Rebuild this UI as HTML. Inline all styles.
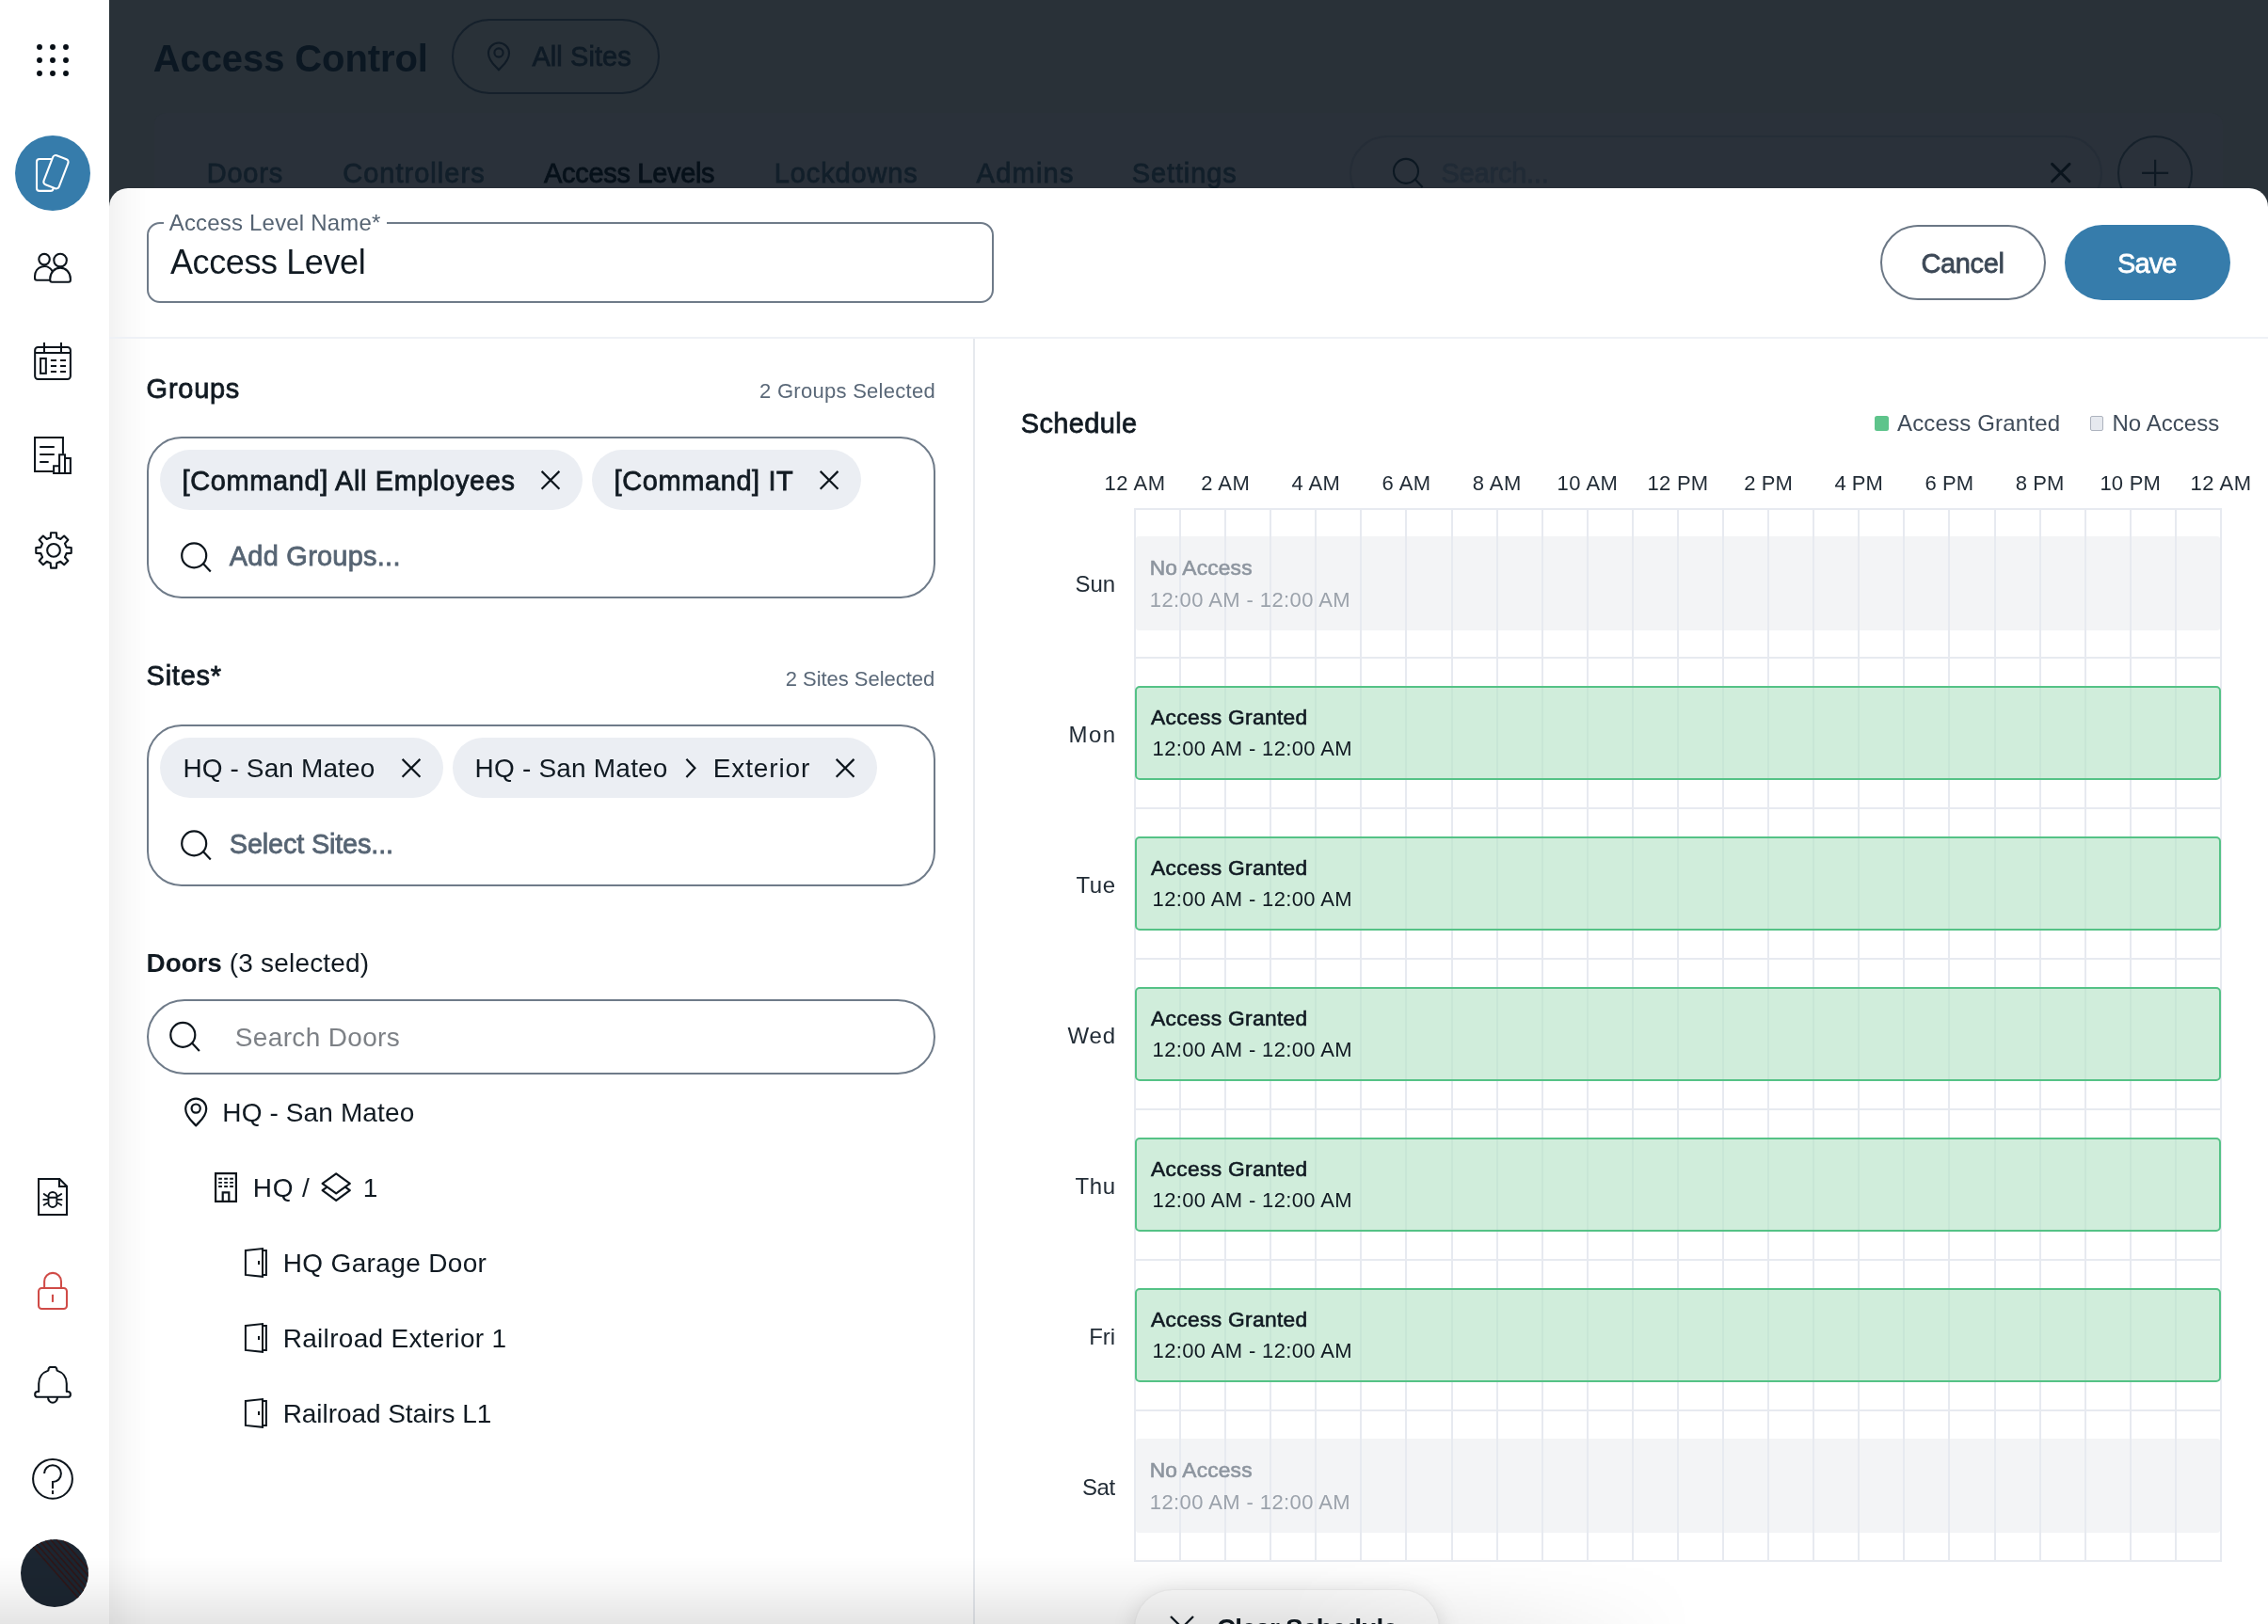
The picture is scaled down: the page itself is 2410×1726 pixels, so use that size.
<!DOCTYPE html>
<html lang="en"><head><meta charset="utf-8"><title>Access Control - Access Level</title>
<style>
html,body{margin:0;padding:0;}
body{width:2410px;height:1726px;position:relative;overflow:hidden;background:#fff;font-family:"Liberation Sans", sans-serif;}
.t{position:absolute;white-space:nowrap;display:block;}
.abs{position:absolute;}
#dark{position:absolute;left:116px;top:0;width:2294px;height:240px;background:#293138;overflow:hidden;}
#dark .in{position:absolute;left:-116px;top:0;width:2410px;height:240px;will-change:transform;}
#modal{position:absolute;left:116px;top:200px;width:2294px;height:1526px;background:#fff;border-radius:20px 20px 0 0;overflow:hidden;}
#modal .in{position:absolute;left:-116px;top:-200px;width:2410px;height:1726px;will-change:transform;}
#side{position:absolute;left:0;top:0;width:116px;height:1726px;background:#fff;}
.pill{position:absolute;box-sizing:border-box;border:2px solid #6f7b89;border-radius:40px;}
.chip{position:absolute;background:#ebeef3;border-radius:32px;height:64px;}
.vl{position:absolute;top:540px;width:2px;height:1120px;background:#e7eaf0;}
.hl{position:absolute;left:1205px;width:1156px;height:2px;background:#e7eaf0;}
.na{position:absolute;left:1207px;width:1152px;height:100px;background:#f3f4f6;border-radius:3px;}
.ag{position:absolute;left:1206px;width:1154px;height:100px;box-sizing:border-box;border:2px solid #55c286;background:rgba(183,227,200,0.66);border-radius:5px;}
</style></head>
<body>
<div id="dark"><div class="in">
<div class="abs" style="left:164px;top:120px;width:2198px;height:200px;border-radius:12px;background:#2a313a"></div>
<div class="pill" style="left:480px;top:20px;width:221px;height:80px;border-color:#15202b"></div>
<svg style="position:absolute;left:0px;top:0px;overflow:visible" width="10" height="10" viewBox="0 0 10 10" fill="none" ><path d="M530 74.30000000000001 C527.0 70.30000000000001 519.0 65.5 519.0 56.5 A11.0 11.0 0 0 1 541.0 56.5 C541.0 65.5 533.0 70.30000000000001 530 74.30000000000001Z" stroke="#101b26" stroke-width="2.1" stroke-linejoin="round"/><circle cx="530" cy="56.0" r="4.6" stroke="#101b26" stroke-width="2.1"/></svg>
<div class="pill" style="left:1434px;top:144px;width:800px;height:80px;border-color:#252d37"></div>
<svg style="position:absolute;left:0px;top:0px;overflow:visible" width="10" height="10" viewBox="0 0 10 10" fill="none" ><circle cx="1494" cy="181.9" r="13" stroke="#0c1822" stroke-width="2.1"/><path d="M1503.66 190.60L1511.6 198.9" stroke="#0c1822" stroke-width="2.1"/></svg>
<svg style="position:absolute;left:0px;top:0px;overflow:visible" width="10" height="10" viewBox="0 0 10 10" fill="none" ><path d="M2180.6000000000004 174.4L2199.0 192.79999999999998M2199.0 174.4L2180.6000000000004 192.79999999999998" stroke="#0a141d" stroke-width="3.0" stroke-linecap="round"/></svg>
<div class="pill" style="left:2250.4px;top:144px;width:79.6px;height:79.6px;border-color:#16212b"></div>
<svg style="position:absolute;left:0px;top:0px;overflow:visible" width="10" height="10" viewBox="0 0 10 10" fill="none" ><path d="M2276.1 183.8H2304.1M2290.1 169.8V197.8" stroke="#0e1923" stroke-width="2.2"/></svg>
<span class="t" id="t0" style="left:162.8px;top:41.7px;font-size:40.0px;line-height:40.0px;font-weight:700;color:#0b1722;letter-spacing:-0.102px;">Access Control</span>
<span class="t" id="t1" style="left:565.4px;top:46.0px;font-size:28.98px;line-height:28.98px;font-weight:400;color:#0f1b26;letter-spacing:0.088px;-webkit-text-stroke:0.78px #0f1b26;">All Sites</span>
<span class="t" id="t2" style="left:219.8px;top:170.2px;font-size:28.98px;line-height:28.98px;font-weight:400;color:#121f2a;letter-spacing:0.770px;-webkit-text-stroke:0.78px #121f2a;">Doors</span>
<span class="t" id="t3" style="left:364.2px;top:170.2px;font-size:28.98px;line-height:28.98px;font-weight:400;color:#121f2a;letter-spacing:1.038px;-webkit-text-stroke:0.78px #121f2a;">Controllers</span>
<span class="t" id="t4" style="left:578.1px;top:170.2px;font-size:28.98px;line-height:28.98px;font-weight:400;color:#07111a;letter-spacing:-0.309px;-webkit-text-stroke:0.78px #07111a;">Access Levels</span>
<span class="t" id="t5" style="left:822.8px;top:170.2px;font-size:28.98px;line-height:28.98px;font-weight:400;color:#121f2a;letter-spacing:0.878px;-webkit-text-stroke:0.78px #121f2a;">Lockdowns</span>
<span class="t" id="t6" style="left:1037.6px;top:170.2px;font-size:28.98px;line-height:28.98px;font-weight:400;color:#121f2a;letter-spacing:1.250px;-webkit-text-stroke:0.78px #121f2a;">Admins</span>
<span class="t" id="t7" style="left:1202.8px;top:170.2px;font-size:28.98px;line-height:28.98px;font-weight:400;color:#121f2a;letter-spacing:0.882px;-webkit-text-stroke:0.78px #121f2a;">Settings</span>
<span class="t" id="t8" style="left:1531.6px;top:170.2px;font-size:28.98px;line-height:28.98px;font-weight:400;color:#212b36;letter-spacing:-0.222px;-webkit-text-stroke:0.78px #212b36;">Search...</span>
</div></div>
<div id="modal"><div class="in">
<div class="abs" style="left:116px;top:200px;width:46px;height:1526px;background:linear-gradient(to right,rgba(0,0,0,0.052),rgba(0,0,0,0.018) 45%,rgba(0,0,0,0))"></div>
<div class="abs" style="left:156px;top:236px;width:900px;height:86px;box-sizing:border-box;border:2px solid #6f7b89;border-radius:14px"></div>
<div class="abs" style="left:174px;top:230px;width:237px;height:14px;background:#fff"></div>
<div class="pill" style="left:1998px;top:239px;width:176px;height:80px;border-color:#6b7785"></div>
<div class="abs" style="left:2194px;top:239px;width:176px;height:80px;border-radius:40px;background:#367cab"></div>
<div class="abs" style="left:116px;top:358px;width:2294px;height:2px;background:#eef1f6"></div>
<div class="abs" style="left:1034px;top:360px;width:2px;height:1366px;background:#e6e9ee"></div>
<div class="pill" style="left:156px;top:464px;width:838px;height:172px;border-radius:37px"></div>
<div class="chip" style="left:170px;top:478px;width:449px"></div>
<div class="chip" style="left:629px;top:478px;width:286px"></div>
<svg style="position:absolute;left:0px;top:0px;overflow:visible" width="10" height="10" viewBox="0 0 10 10" fill="none" ><path d="M575.6 500.90000000000003L594.4 519.7M594.4 500.90000000000003L575.6 519.7" stroke="#0d151c" stroke-width="2.2"/></svg>
<svg style="position:absolute;left:0px;top:0px;overflow:visible" width="10" height="10" viewBox="0 0 10 10" fill="none" ><path d="M871.7 500.90000000000003L890.5 519.7M890.5 500.90000000000003L871.7 519.7" stroke="#0d151c" stroke-width="2.2"/></svg>
<svg style="position:absolute;left:0px;top:0px;overflow:visible" width="10" height="10" viewBox="0 0 10 10" fill="none" ><circle cx="206.2" cy="590.4" r="13" stroke="#0d151c" stroke-width="2.2"/><path d="M215.86 599.10L223.79999999999998 607.4" stroke="#0d151c" stroke-width="2.2"/></svg>
<div class="pill" style="left:156px;top:770px;width:838px;height:172px;border-radius:37px"></div>
<div class="chip" style="left:170px;top:784px;width:301px"></div>
<div class="chip" style="left:481px;top:784px;width:451px"></div>
<svg style="position:absolute;left:0px;top:0px;overflow:visible" width="10" height="10" viewBox="0 0 10 10" fill="none" ><path d="M427.6 806.9L446.4 825.6999999999999M446.4 806.9L427.6 825.6999999999999" stroke="#0d151c" stroke-width="2.2"/></svg>
<svg style="position:absolute;left:0px;top:0px;overflow:visible" width="10" height="10" viewBox="0 0 10 10" fill="none" ><path d="M888.7 806.9L907.5 825.6999999999999M907.5 806.9L888.7 825.6999999999999" stroke="#0d151c" stroke-width="2.2"/></svg>
<svg style="position:absolute;left:0px;top:0px;overflow:visible" width="10" height="10" viewBox="0 0 10 10" fill="none" ><path d="M729.4 806.6999999999999L738.4 816.3L729.4 825.9" stroke="#0d151c" stroke-width="2.2"/></svg>
<svg style="position:absolute;left:0px;top:0px;overflow:visible" width="10" height="10" viewBox="0 0 10 10" fill="none" ><circle cx="206.2" cy="896.4" r="13" stroke="#0d151c" stroke-width="2.2"/><path d="M215.86 905.10L223.79999999999998 913.4" stroke="#0d151c" stroke-width="2.2"/></svg>
<div class="pill" style="left:156px;top:1062px;width:838px;height:80px"></div>
<svg style="position:absolute;left:0px;top:0px;overflow:visible" width="10" height="10" viewBox="0 0 10 10" fill="none" ><circle cx="194.3" cy="1099.9" r="13" stroke="#0d151c" stroke-width="2.2"/><path d="M203.96 1108.60L211.9 1116.9" stroke="#0d151c" stroke-width="2.2"/></svg>
<svg style="position:absolute;left:0px;top:0px;overflow:visible" width="10" height="10" viewBox="0 0 10 10" fill="none" ><path d="M208.2 1196.4 C205.2 1192.4 197.2 1187.6 197.2 1178.6 A11.0 11.0 0 0 1 219.2 1178.6 C219.2 1187.6 211.2 1192.4 208.2 1196.4Z" stroke="#0d151c" stroke-width="2.2" stroke-linejoin="round"/><circle cx="208.2" cy="1178.1" r="4.6" stroke="#0d151c" stroke-width="2.2"/></svg>
<svg style="position:absolute;left:0px;top:0px;overflow:visible" width="10" height="10" viewBox="0 0 10 10" fill="none" ><rect x="229.1" y="1247.1" width="21.8" height="29.8" stroke="#0d151c" stroke-width="2.2"/><path d="M232.2 1252.7H247.9" stroke="#0d151c" stroke-width="1.9" stroke-dasharray="3.7 2.3"/><path d="M232.2 1256.8500000000001H247.9" stroke="#0d151c" stroke-width="1.9" stroke-dasharray="3.7 2.3"/><path d="M232.2 1261.0H247.9" stroke="#0d151c" stroke-width="1.9" stroke-dasharray="3.7 2.3"/><path d="M236.7 1277V1267.4H243.3V1277" stroke="#0d151c" stroke-width="2.2"/></svg>
<svg style="position:absolute;left:0px;top:0px;overflow:visible" width="10" height="10" viewBox="0 0 10 10" fill="none" ><path d="M357.2 1247.3L371.8 1257.8L357.2 1268.3L342.59999999999997 1257.8Z" stroke="#0d151c" stroke-width="2.2" stroke-linejoin="round"/><path d="M347.4 1261.6L342.59999999999997 1265.2L357.2 1275.8L371.8 1265.2L367.0 1261.6" stroke="#0d151c" stroke-width="2.2" stroke-linejoin="round"/></svg>
<svg style="position:absolute;left:0px;top:0px;overflow:visible" width="10" height="10" viewBox="0 0 10 10" fill="none" ><path d="M260.9 1329.0L279.0 1327.1000000000001V1356.8L260.9 1354.9Z" stroke="#0d151c" stroke-width="2.0" stroke-linejoin="miter"/><path d="M279.0 1329.0H282.9V1354.9H279.0" stroke="#0d151c" stroke-width="2.0" stroke-linejoin="miter"/><path d="M275 1340.0V1344.0" stroke="#0d151c" stroke-width="2.0"/></svg>
<svg style="position:absolute;left:0px;top:0px;overflow:visible" width="10" height="10" viewBox="0 0 10 10" fill="none" ><path d="M260.9 1409.0L279.0 1407.1000000000001V1436.8L260.9 1434.9Z" stroke="#0d151c" stroke-width="2.0" stroke-linejoin="miter"/><path d="M279.0 1409.0H282.9V1434.9H279.0" stroke="#0d151c" stroke-width="2.0" stroke-linejoin="miter"/><path d="M275 1420.0V1424.0" stroke="#0d151c" stroke-width="2.0"/></svg>
<svg style="position:absolute;left:0px;top:0px;overflow:visible" width="10" height="10" viewBox="0 0 10 10" fill="none" ><path d="M260.9 1489.0L279.0 1487.1000000000001V1516.8L260.9 1514.9Z" stroke="#0d151c" stroke-width="2.0" stroke-linejoin="miter"/><path d="M279.0 1489.0H282.9V1514.9H279.0" stroke="#0d151c" stroke-width="2.0" stroke-linejoin="miter"/><path d="M275 1500.0V1504.0" stroke="#0d151c" stroke-width="2.0"/></svg>
<div class="abs" style="left:1992px;top:442px;width:15px;height:16px;border-radius:2.5px;background:#5ec48b"></div>
<div class="abs" style="left:2221px;top:442px;width:14px;height:16px;box-sizing:border-box;border:1.6px solid #adb3be;border-radius:2px;background:#e6e9ef"></div>
<div class="na" style="top:570px"></div>
<div class="na" style="top:1529px"></div>
<div class="vl" style="left:1205px"></div>
<div class="vl" style="left:1253px"></div>
<div class="vl" style="left:1301px"></div>
<div class="vl" style="left:1349px"></div>
<div class="vl" style="left:1397px"></div>
<div class="vl" style="left:1445px"></div>
<div class="vl" style="left:1493px"></div>
<div class="vl" style="left:1542px"></div>
<div class="vl" style="left:1590px"></div>
<div class="vl" style="left:1638px"></div>
<div class="vl" style="left:1686px"></div>
<div class="vl" style="left:1734px"></div>
<div class="vl" style="left:1782px"></div>
<div class="vl" style="left:1830px"></div>
<div class="vl" style="left:1878px"></div>
<div class="vl" style="left:1926px"></div>
<div class="vl" style="left:1974px"></div>
<div class="vl" style="left:2022px"></div>
<div class="vl" style="left:2070px"></div>
<div class="vl" style="left:2119px"></div>
<div class="vl" style="left:2167px"></div>
<div class="vl" style="left:2215px"></div>
<div class="vl" style="left:2263px"></div>
<div class="vl" style="left:2311px"></div>
<div class="vl" style="left:2359px"></div>
<div class="hl" style="top:540px"></div>
<div class="hl" style="top:698px"></div>
<div class="hl" style="top:858px"></div>
<div class="hl" style="top:1018px"></div>
<div class="hl" style="top:1178px"></div>
<div class="hl" style="top:1338px"></div>
<div class="hl" style="top:1498px"></div>
<div class="hl" style="top:1658px"></div>
<div class="ag" style="top:729px"></div>
<div class="ag" style="top:889px"></div>
<div class="ag" style="top:1049px"></div>
<div class="ag" style="top:1209px"></div>
<div class="ag" style="top:1369px"></div>
<div class="abs" style="left:1206px;top:1690px;width:323px;height:80px;border-radius:40px;background:#fcfcfc;box-shadow:0 4px 26px rgba(0,0,0,0.13),0 0 3px rgba(0,0,0,0.08)"></div>
<svg style="position:absolute;left:0px;top:0px;overflow:visible" width="10" height="10" viewBox="0 0 10 10" fill="none" ><path d="M1244 1718L1268 1742M1268 1718L1244 1742" stroke="#111a22" stroke-width="2.4"/></svg>
<span class="t" id="t9" style="left:179.7px;top:224.7px;font-size:24.0px;line-height:24.0px;font-weight:400;color:#566473;letter-spacing:0.191px;">Access Level Name*</span>
<span class="t" id="t10" style="left:181.0px;top:261.2px;font-size:36.0px;line-height:36.0px;font-weight:400;color:#111a22;letter-spacing:-0.399px;">Access Level</span>
<span class="t" id="t11" style="left:2041.4px;top:265.5px;font-size:28.98px;line-height:28.98px;font-weight:400;color:#3c4856;letter-spacing:-0.305px;-webkit-text-stroke:0.78px #3c4856;">Cancel</span>
<span class="t" id="t12" style="left:2250.1px;top:265.5px;font-size:28.98px;line-height:28.98px;font-weight:400;color:#ffffff;letter-spacing:-0.924px;-webkit-text-stroke:0.78px #ffffff;">Save</span>
<span class="t" id="t13" style="left:155.6px;top:398.7px;font-size:28.98px;line-height:28.98px;font-weight:400;color:#111a22;letter-spacing:0.752px;-webkit-text-stroke:0.78px #111a22;">Groups</span>
<span class="t" id="t14" style="left:807.0px;top:404.6px;font-size:22.0px;line-height:22.0px;font-weight:400;color:#5a6878;letter-spacing:0.282px;">2 Groups Selected</span>
<span class="t" id="t15" style="left:193.6px;top:496.7px;font-size:28.98px;line-height:28.98px;font-weight:400;color:#111a22;letter-spacing:0.620px;-webkit-text-stroke:0.78px #111a22;">[Command] All Employees</span>
<span class="t" id="t16" style="left:652.6px;top:496.7px;font-size:28.98px;line-height:28.98px;font-weight:400;color:#111a22;letter-spacing:0.603px;-webkit-text-stroke:0.78px #111a22;">[Command] IT</span>
<span class="t" id="t17" style="left:243.8px;top:577.2px;font-size:28.98px;line-height:28.98px;font-weight:400;color:#566473;letter-spacing:0.242px;-webkit-text-stroke:0.78px #566473;">Add Groups...</span>
<span class="t" id="t18" style="left:155.6px;top:704.3px;font-size:28.98px;line-height:28.98px;font-weight:400;color:#111a22;letter-spacing:0.754px;-webkit-text-stroke:0.78px #111a22;">Sites*</span>
<span class="t" id="t19" style="left:834.8px;top:710.6px;font-size:22.0px;line-height:22.0px;font-weight:400;color:#5a6878;letter-spacing:-0.043px;">2 Sites Selected</span>
<span class="t" id="t20" style="left:194.4px;top:803.3px;font-size:28.0px;line-height:28.0px;font-weight:400;color:#111a22;letter-spacing:0.119px;">HQ - San Mateo</span>
<span class="t" id="t21" style="left:504.6px;top:803.3px;font-size:28.0px;line-height:28.0px;font-weight:400;color:#111a22;letter-spacing:0.196px;">HQ - San Mateo</span>
<span class="t" id="t22" style="left:757.8px;top:803.3px;font-size:28.0px;line-height:28.0px;font-weight:400;color:#111a22;letter-spacing:0.856px;">Exterior</span>
<span class="t" id="t23" style="left:243.8px;top:883.3px;font-size:28.98px;line-height:28.98px;font-weight:400;color:#566473;letter-spacing:-0.204px;-webkit-text-stroke:0.78px #566473;">Select Sites...</span>
<span class="t" id="t24" style="left:155.6px;top:1009.5px;font-size:28.0px;line-height:28.0px;font-weight:700;color:#111a22;letter-spacing:-0.187px;">Doors</span>
<span class="t" id="t25" style="left:243.8px;top:1009.5px;font-size:28.0px;line-height:28.0px;font-weight:400;color:#111a22;letter-spacing:0.188px;">(3 selected)</span>
<span class="t" id="t26" style="left:249.8px;top:1088.5px;font-size:28.0px;line-height:28.0px;font-weight:400;color:#7d8186;letter-spacing:0.343px;">Search Doors</span>
<span class="t" id="t27" style="left:236.3px;top:1169.3px;font-size:28.0px;line-height:28.0px;font-weight:400;color:#111a22;letter-spacing:0.127px;">HQ - San Mateo</span>
<span class="t" id="t28" style="left:268.8px;top:1249.1px;font-size:28.0px;line-height:28.0px;font-weight:400;color:#111a22;letter-spacing:0.799px;">HQ /</span>
<span class="t" id="t29" style="left:385.8px;top:1249.1px;font-size:28.0px;line-height:28.0px;font-weight:400;color:#111a22;letter-spacing:0.000px;">1</span>
<span class="t" id="t30" style="left:300.7px;top:1328.7px;font-size:28.0px;line-height:28.0px;font-weight:400;color:#111a22;letter-spacing:0.355px;">HQ Garage Door</span>
<span class="t" id="t31" style="left:300.7px;top:1408.7px;font-size:28.0px;line-height:28.0px;font-weight:400;color:#111a22;letter-spacing:0.305px;">Railroad Exterior 1</span>
<span class="t" id="t32" style="left:300.7px;top:1488.8px;font-size:28.0px;line-height:28.0px;font-weight:400;color:#111a22;letter-spacing:-0.059px;">Railroad Stairs L1</span>
<span class="t" id="t33" style="left:1084.8px;top:436.1px;font-size:28.98px;line-height:28.98px;font-weight:400;color:#111a22;letter-spacing:0.364px;-webkit-text-stroke:0.78px #111a22;">Schedule</span>
<span class="t" id="t34" style="left:2016.0px;top:438.3px;font-size:24.0px;line-height:24.0px;font-weight:400;color:#3f4b59;letter-spacing:0.179px;">Access Granted</span>
<span class="t" id="t35" style="left:2244.5px;top:438.3px;font-size:24.0px;line-height:24.0px;font-weight:400;color:#3f4b59;letter-spacing:0.036px;">No Access</span>
<span class="t" id="t36" style="left:1173.6px;top:502.5px;font-size:22.0px;line-height:22.0px;font-weight:400;color:#222c36;letter-spacing:0.541px;">12 AM</span>
<span class="t" id="t37" style="left:1276.2px;top:502.5px;font-size:22.0px;line-height:22.0px;font-weight:400;color:#222c36;letter-spacing:0.466px;">2 AM</span>
<span class="t" id="t38" style="left:1372.4px;top:502.5px;font-size:22.0px;line-height:22.0px;font-weight:400;color:#222c36;letter-spacing:0.466px;">4 AM</span>
<span class="t" id="t39" style="left:1468.6px;top:502.5px;font-size:22.0px;line-height:22.0px;font-weight:400;color:#222c36;letter-spacing:0.466px;">6 AM</span>
<span class="t" id="t40" style="left:1564.7px;top:502.5px;font-size:22.0px;line-height:22.0px;font-weight:400;color:#222c36;letter-spacing:0.466px;">8 AM</span>
<span class="t" id="t41" style="left:1654.4px;top:502.5px;font-size:22.0px;line-height:22.0px;font-weight:400;color:#222c36;letter-spacing:0.541px;">10 AM</span>
<span class="t" id="t42" style="left:1750.6px;top:502.5px;font-size:22.0px;line-height:22.0px;font-weight:400;color:#222c36;letter-spacing:0.237px;">12 PM</span>
<span class="t" id="t43" style="left:1853.2px;top:502.5px;font-size:22.0px;line-height:22.0px;font-weight:400;color:#222c36;letter-spacing:0.060px;">2 PM</span>
<span class="t" id="t44" style="left:1949.4px;top:502.5px;font-size:22.0px;line-height:22.0px;font-weight:400;color:#222c36;letter-spacing:0.060px;">4 PM</span>
<span class="t" id="t45" style="left:2045.5px;top:502.5px;font-size:22.0px;line-height:22.0px;font-weight:400;color:#222c36;letter-spacing:0.060px;">6 PM</span>
<span class="t" id="t46" style="left:2141.7px;top:502.5px;font-size:22.0px;line-height:22.0px;font-weight:400;color:#222c36;letter-spacing:0.060px;">8 PM</span>
<span class="t" id="t47" style="left:2231.4px;top:502.5px;font-size:22.0px;line-height:22.0px;font-weight:400;color:#222c36;letter-spacing:0.237px;">10 PM</span>
<span class="t" id="t48" style="left:2327.5px;top:502.5px;font-size:22.0px;line-height:22.0px;font-weight:400;color:#222c36;letter-spacing:0.541px;">12 AM</span>
<span class="t" id="t49" style="left:1142.4px;top:608.9px;font-size:24.0px;line-height:24.0px;font-weight:400;color:#222c36;letter-spacing:-0.012px;">Sun</span>
<span class="t" id="t50" style="left:1135.4px;top:768.9px;font-size:24.0px;line-height:24.0px;font-weight:400;color:#222c36;letter-spacing:1.496px;">Mon</span>
<span class="t" id="t51" style="left:1143.4px;top:928.9px;font-size:24.0px;line-height:24.0px;font-weight:400;color:#222c36;letter-spacing:0.606px;">Tue</span>
<span class="t" id="t52" style="left:1134.4px;top:1088.9px;font-size:24.0px;line-height:24.0px;font-weight:400;color:#222c36;letter-spacing:0.879px;">Wed</span>
<span class="t" id="t53" style="left:1142.4px;top:1248.9px;font-size:24.0px;line-height:24.0px;font-weight:400;color:#222c36;letter-spacing:0.660px;">Thu</span>
<span class="t" id="t54" style="left:1157.2px;top:1408.9px;font-size:24.0px;line-height:24.0px;font-weight:400;color:#222c36;letter-spacing:-0.052px;">Fri</span>
<span class="t" id="t55" style="left:1150.1px;top:1568.9px;font-size:24.0px;line-height:24.0px;font-weight:400;color:#222c36;letter-spacing:-0.526px;">Sat</span>
<span class="t" id="t56" style="left:1221.7px;top:591.7px;font-size:22.77px;line-height:22.77px;font-weight:400;color:#8d959f;letter-spacing:0.160px;-webkit-text-stroke:0.62px #8d959f;">No Access</span>
<span class="t" id="t57" style="left:1221.8px;top:626.8px;font-size:22.0px;line-height:22.0px;font-weight:400;color:#9ba2ab;letter-spacing:0.410px;">12:00 AM - 12:00 AM</span>
<span class="t" id="t58" style="left:1223.0px;top:750.5px;font-size:22.77px;line-height:22.77px;font-weight:400;color:#111a22;letter-spacing:0.329px;-webkit-text-stroke:0.62px #111a22;">Access Granted</span>
<span class="t" id="t59" style="left:1224.6px;top:785.4px;font-size:22.0px;line-height:22.0px;font-weight:400;color:#111a22;letter-spacing:0.360px;">12:00 AM - 12:00 AM</span>
<span class="t" id="t60" style="left:1223.0px;top:910.5px;font-size:22.77px;line-height:22.77px;font-weight:400;color:#111a22;letter-spacing:0.329px;-webkit-text-stroke:0.62px #111a22;">Access Granted</span>
<span class="t" id="t61" style="left:1224.6px;top:945.4px;font-size:22.0px;line-height:22.0px;font-weight:400;color:#111a22;letter-spacing:0.360px;">12:00 AM - 12:00 AM</span>
<span class="t" id="t62" style="left:1223.0px;top:1070.5px;font-size:22.77px;line-height:22.77px;font-weight:400;color:#111a22;letter-spacing:0.329px;-webkit-text-stroke:0.62px #111a22;">Access Granted</span>
<span class="t" id="t63" style="left:1224.6px;top:1105.4px;font-size:22.0px;line-height:22.0px;font-weight:400;color:#111a22;letter-spacing:0.360px;">12:00 AM - 12:00 AM</span>
<span class="t" id="t64" style="left:1223.0px;top:1230.5px;font-size:22.77px;line-height:22.77px;font-weight:400;color:#111a22;letter-spacing:0.329px;-webkit-text-stroke:0.62px #111a22;">Access Granted</span>
<span class="t" id="t65" style="left:1224.6px;top:1265.4px;font-size:22.0px;line-height:22.0px;font-weight:400;color:#111a22;letter-spacing:0.360px;">12:00 AM - 12:00 AM</span>
<span class="t" id="t66" style="left:1223.0px;top:1390.5px;font-size:22.77px;line-height:22.77px;font-weight:400;color:#111a22;letter-spacing:0.329px;-webkit-text-stroke:0.62px #111a22;">Access Granted</span>
<span class="t" id="t67" style="left:1224.6px;top:1425.4px;font-size:22.0px;line-height:22.0px;font-weight:400;color:#111a22;letter-spacing:0.360px;">12:00 AM - 12:00 AM</span>
<span class="t" id="t68" style="left:1221.7px;top:1550.7px;font-size:22.77px;line-height:22.77px;font-weight:400;color:#8d959f;letter-spacing:0.160px;-webkit-text-stroke:0.62px #8d959f;">No Access</span>
<span class="t" id="t69" style="left:1221.8px;top:1585.8px;font-size:22.0px;line-height:22.0px;font-weight:400;color:#9ba2ab;letter-spacing:0.410px;">12:00 AM - 12:00 AM</span>
<span class="t" id="t70" style="left:1292.8px;top:1717.3px;font-size:28.0px;line-height:28.0px;font-weight:700;color:#111a22;letter-spacing:-0.766px;">Clear Schedule</span>
</div></div>
<div id="side">
<svg style="position:absolute;left:0px;top:0px;overflow:visible" width="116" height="100" viewBox="0 0 116 100" fill="none" ><circle cx="42" cy="50" r="2.95" fill="#080f16"/><circle cx="56" cy="50" r="2.95" fill="#080f16"/><circle cx="70" cy="50" r="2.95" fill="#080f16"/><circle cx="42" cy="64" r="2.95" fill="#080f16"/><circle cx="56" cy="64" r="2.95" fill="#080f16"/><circle cx="70" cy="64" r="2.95" fill="#080f16"/><circle cx="42" cy="78" r="2.95" fill="#080f16"/><circle cx="56" cy="78" r="2.95" fill="#080f16"/><circle cx="70" cy="78" r="2.95" fill="#080f16"/></svg>
<svg style="position:absolute;left:0px;top:0px;overflow:visible" width="116" height="260" viewBox="0 0 116 260" fill="none" ><circle cx="56" cy="184" r="40" fill="#367cab"/><rect x="39" y="169" width="17.6" height="33.9" rx="3" stroke="#fff" stroke-width="2.1"/><g transform="rotate(21 59.45 182.75)"><rect x="50.75" y="166.15" width="17.4" height="33.2" rx="3.2" fill="#367cab" stroke="#fff" stroke-width="2.1"/></g></svg>
<svg style="position:absolute;left:0px;top:0px;overflow:visible" width="116" height="320" viewBox="0 0 116 320" fill="none" ><circle cx="47.05" cy="275.6" r="5.75" stroke="#0d151c" stroke-width="2.1" stroke-linejoin="round" stroke-linecap="round"/><path d="M55.6 288.1A10 10.5 0 0 0 37.05 293.6V295.8Q37.05 297.8 39.05 297.8H52.6" stroke="#0d151c" stroke-width="2.1" stroke-linejoin="round" stroke-linecap="round"/><circle cx="64.05" cy="276.6" r="6.8" stroke="#0d151c" stroke-width="2.1" stroke-linejoin="round" stroke-linecap="round"/><path d="M53.25 296.2A10.8 11.6 0 0 1 74.85 296.2V297.8Q74.85 299.8 72.85 299.8H55.25Q53.25 299.8 53.25 297.8Z" fill="#fff" stroke="#0d151c" stroke-width="2.1" stroke-linejoin="round" stroke-linecap="round"/></svg>
<svg style="position:absolute;left:0px;top:0px;overflow:visible" width="116" height="420" viewBox="0 0 116 420" fill="none" ><rect x="37.16" y="369" width="37.71" height="33.95" rx="3.2" stroke="#0d151c" stroke-width="2.05"/><path d="M37.16 374.95H74.87" stroke="#0d151c" stroke-width="2.05"/><path d="M46.98 363.9V375M64.97 363.9V375" stroke="#0d151c" stroke-width="2.05"/><rect x="43.07" y="380.94" width="5.76" height="15.9" stroke="#0d151c" stroke-width="2.05"/><path d="M53.9 382.96H60M64.05 382.96H69.96" stroke="#0d151c" stroke-width="2.05"/><path d="M53.9 388.99H60M64.05 388.99H69.96" stroke="#0d151c" stroke-width="2.05"/><path d="M53.9 394.97H60M64.05 394.97H69.96" stroke="#0d151c" stroke-width="2.05"/></svg>
<svg style="position:absolute;left:0px;top:0px;overflow:visible" width="116" height="520" viewBox="0 0 116 520" fill="none" ><path d="M56.3 500.9H37.05V464.94H66.93V482.6" stroke="#0d151c" stroke-width="2.05"/><path d="M43 474.95H57M43 482.96H57M43 490.9H50.9" stroke="#0d151c" stroke-width="2.05" stroke-linecap="round"/><path d="M57.1 502.95V495.16H63.09M63.09 502.95V483.26H69.03V502.95M69.03 487.03H74.87V502.95M56.08 502.95H75.9" stroke="#0d151c" stroke-width="2.05"/></svg>
<svg style="position:absolute;left:0px;top:0px;overflow:visible" width="116" height="620" viewBox="0 0 116 620" fill="none" ><path d="M53.73 571.29 L54.04 566.18 L59.96 566.18 L60.27 571.29 L64.31 572.96 L68.14 569.57 L72.33 573.76 L68.94 577.59 L70.61 581.63 L75.72 581.94 L75.72 587.86 L70.61 588.17 L68.94 592.21 L72.33 596.04 L68.14 600.23 L64.31 596.84 L60.27 598.51 L59.96 603.62 L54.04 603.62 L53.73 598.51 L49.69 596.84 L45.86 600.23 L41.67 596.04 L45.06 592.21 L43.39 588.17 L38.28 587.86 L38.28 581.94 L43.39 581.63 L45.06 577.59 L41.67 573.76 L45.86 569.57 L49.69 572.96Z" stroke="#0d151c" stroke-width="2.1" stroke-linejoin="round"/><circle cx="57.0" cy="584.9" r="6.85" stroke="#0d151c" stroke-width="2.1" stroke-linejoin="round"/></svg>
<svg style="position:absolute;left:0px;top:0px;overflow:visible" width="116" height="1300" viewBox="0 0 116 1300" fill="none" ><path d="M41.04 1252.97H63.3L70.99 1260.7V1290.94H41.04Z" stroke="#0d151c" stroke-width="2.05" stroke-linejoin="miter"/><path d="M62.94 1252.97V1261.02H70.99" stroke="#0d151c" stroke-width="2.05" stroke-linejoin="miter"/><rect x="51.5" y="1266.95" width="8.85" height="16" rx="4.42" stroke="#0d151c" stroke-width="1.85" stroke-linecap="round"/><path d="M51.6 1272.74H60.3" stroke="#0d151c" stroke-width="1.85" stroke-linecap="round"/><path d="M50.6 1271.3Q48.6 1270.6 46.7 1269M50.6 1274.9H46.3M50.6 1278.7Q48.6 1279.4 46.7 1280.8M61.3 1271.3Q63.3 1270.6 65.2 1269M61.3 1274.9H65.6M61.3 1278.7Q63.3 1279.4 65.2 1280.8" stroke="#0d151c" stroke-width="1.85" stroke-linecap="round"/></svg>
<svg style="position:absolute;left:0px;top:0px;overflow:visible" width="116" height="1400" viewBox="0 0 116 1400" fill="none" ><rect x="41.04" y="1369.04" width="29.95" height="21.9" rx="3.3" stroke="#d04b47" stroke-width="2.05"/><path d="M47.13 1369V1361.8A8.92 8.92 0 0 1 64.97 1361.8V1369" stroke="#d04b47" stroke-width="2.05"/><path d="M55.95 1375.8V1383.9" stroke="#d04b47" stroke-width="2.05"/></svg>
<svg style="position:absolute;left:0px;top:0px;overflow:visible" width="116" height="1500" viewBox="0 0 116 1500" fill="none" ><path d="M41.2 1479H40.05A2.9 2.9 0 0 0 40.05 1484.8H72A2.9 2.9 0 0 0 72 1479H70.8V1470.5C70.8 1463.5 66.5 1458.6 60.6 1456.6C60.4 1454.2 59.6 1452.97 58.4 1452.97H53.5C52.3 1452.97 51.5 1454.2 51.3 1456.6C45.4 1458.6 41.2 1463.5 41.2 1470.5Z" stroke="#0d151c" stroke-width="2.05" stroke-linejoin="round" stroke-linecap="round"/><path d="M51 1485A5 5.8 0 0 0 61 1485" stroke="#0d151c" stroke-width="2.05" stroke-linejoin="round" stroke-linecap="round"/></svg>
<svg style="position:absolute;left:0px;top:0px;overflow:visible" width="116" height="1600" viewBox="0 0 116 1600" fill="none" ><circle cx="56" cy="1571.83" r="20.9" stroke="#0d151c" stroke-width="2.05"/><path d="M47.06 1566.1A8.92 8.92 0 1 1 55.98 1575.02V1581.9" stroke="#0d151c" stroke-width="2.05" stroke-linejoin="miter"/><path d="M55.98 1584.1V1588" stroke="#0d151c" stroke-width="2.05"/></svg>
<svg style="position:absolute;left:0px;top:0px;overflow:visible" width="116" height="1726" viewBox="0 0 116 1726" fill="none" ><defs><clipPath id="avc"><circle cx="58" cy="1672" r="36"/></clipPath></defs><circle cx="58" cy="1672" r="36" fill="#1c2631"/><g clip-path="url(#avc)"><path d="M26.63 1634.1L96.80 1714.1" stroke="#301617" stroke-width="1.5"/><path d="M32.93 1634.1L103.10 1714.1" stroke="#301617" stroke-width="1.5"/><path d="M39.23 1634.1L109.40 1714.1" stroke="#301617" stroke-width="1.5"/><path d="M45.53 1634.1L115.70 1714.1" stroke="#301617" stroke-width="1.5"/><path d="M51.83 1634.1L122.00 1714.1" stroke="#301617" stroke-width="1.5"/><path d="M58.13 1634.1L128.30 1714.1" stroke="#301617" stroke-width="1.5"/><path d="M64.43 1634.1L134.60 1714.1" stroke="#301617" stroke-width="1.5"/></g></svg>
</div>
<div class="abs" style="left:0;top:1654px;width:1800px;height:72px;background:linear-gradient(to bottom,rgba(0,0,0,0),rgba(0,0,0,0.03) 40%,rgba(0,0,0,0.1));-webkit-mask-image:linear-gradient(to right,#000 0,#000 76%,transparent 100%);mask-image:linear-gradient(to right,#000 0,#000 76%,transparent 100%);pointer-events:none"></div>
</body></html>
